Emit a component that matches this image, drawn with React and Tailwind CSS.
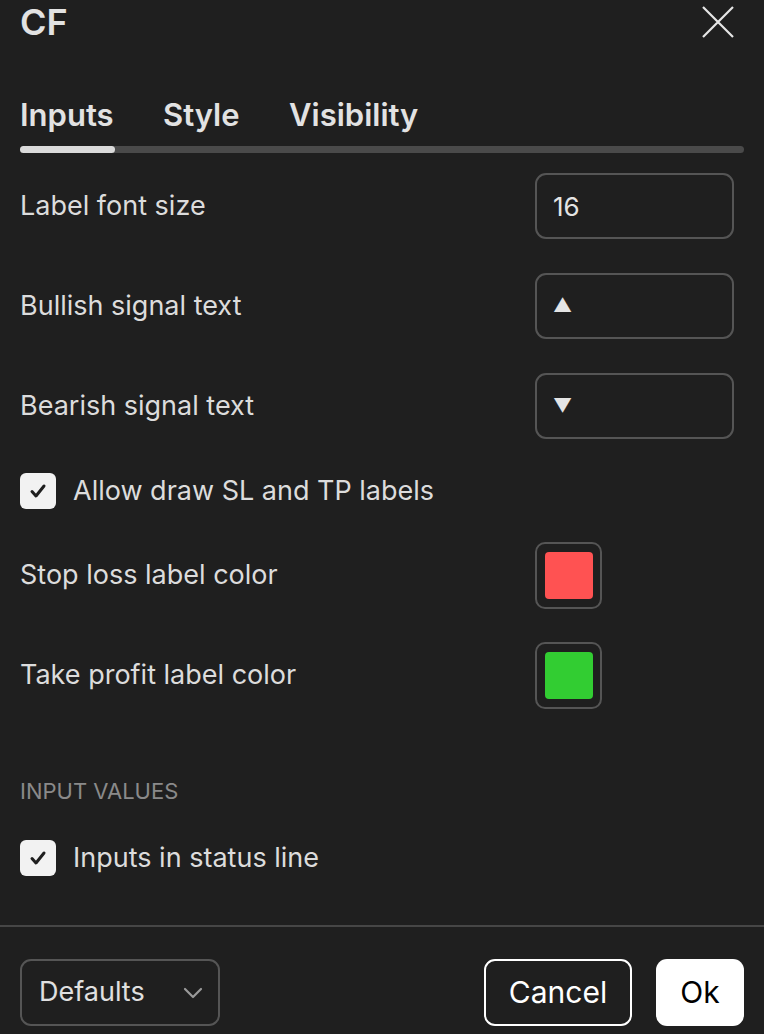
import React, { useState } from "react";

const font = { fontFamily: "Inter, 'Liberation Sans', sans-serif" };

function TextRow({ label, value, small, mt }) {
  return (
    <div className={`flex items-center justify-between h-[66px] ${mt}`}>
      <span className="text-[27px] text-[#dcdcdc]">{label}</span>
      <div
        className={`w-[199px] h-[66px] mr-[10px] rounded-[11px] border-2 border-[#555555] flex items-center pl-[16px] text-[#e4e4e4] ${
          small ? "text-[19px]" : "text-[26px]"
        }`}
      >
        {value}
      </div>
    </div>
  );
}

function ColorRow({ label, color, mt }) {
  return (
    <div className={`flex items-center h-[67px] ${mt}`}>
      <span className="flex-1 text-[27px] text-[#dcdcdc]">{label}</span>
      <div className="w-[67px] h-[67px] rounded-[10px] border-2 border-[#555555] flex items-center justify-center mr-[142px]">
        <div className={`w-[48px] h-[47px] rounded-[4px] ${color}`}></div>
      </div>
    </div>
  );
}

function CheckRow({ label, mt }) {
  return (
    <div className={`flex items-center h-[36px] ${mt}`}>
      <div className="w-[36px] h-[36px] rounded-[6px] bg-[#f2f2f2] flex items-center justify-center">
        <svg width="20" height="20" viewBox="0 0 20 20" fill="none">
          <path
            d="M4 10.5l4 4.5 8-10"
            stroke="#1f1f1f"
            strokeWidth="3"
            strokeLinecap="round"
            strokeLinejoin="round"
          />
        </svg>
      </div>
      <span className="ml-[17px] text-[27px] text-[#dcdcdc]">{label}</span>
    </div>
  );
}

export default function App() {
  const [tab] = useState("Inputs");

  return (
    <div className="w-[764px] h-[1034px] bg-[#1f1f1f] overflow-hidden flex flex-col" style={font}>
      <div className="px-[20px]">
        {/* header */}
        <div className="flex items-center justify-between h-[44px]">
          <span className="text-[36px] font-semibold text-[#e2e2e2] leading-none">CF</span>
          <svg width="34" height="34" viewBox="0 0 34 34" fill="none" className="mr-[9px]">
            <path d="M2 2l30 30M32 2L2 32" stroke="#e6e6e6" strokeWidth="2.2" />
          </svg>
        </div>

        {/* tabs */}
        <div className="flex items-center h-[40px] mt-[51px] text-[31px] font-semibold text-[#e2e2e2]">
          <span className="w-[143px]">Inputs</span>
          <span className="w-[126px]">Style</span>
          <span>Visibility</span>
        </div>
        <div className="mt-[11px] h-[7px] rounded-full bg-[#4a4a4a] flex">
          <div className={`h-[7px] w-[95px] rounded-full ${tab === "Inputs" ? "bg-[#dadada]" : ""}`}></div>
        </div>

        <TextRow label="Label font size" value="16" mt="mt-[20px]" />
        <TextRow label="Bullish signal text" value="▲" small mt="mt-[34px]" />
        <TextRow label="Bearish signal text" value="▼" small mt="mt-[34px]" />

        <CheckRow label="Allow draw SL and TP labels" mt="mt-[34px]" />

        <ColorRow label="Stop loss label color" color="bg-[#ff5252]" mt="mt-[33px]" />
        <ColorRow label="Take profit label color" color="bg-[#32cd32]" mt="mt-[33px]" />

        <div className="mt-[70px] h-[24px] flex items-center text-[22px] text-[#8a8a8a] uppercase">
          Input values
        </div>

        <CheckRow label="Inputs in status line" mt="mt-[37px]" />
      </div>

      <div className="mt-[49px] h-[2px] bg-[#464646]"></div>

      {/* footer */}
      <div className="px-[20px] mt-[32px] flex items-center">
        <div className="w-[200px] h-[67px] rounded-[11px] border-2 border-[#555555] flex items-center justify-between pl-[17px] pr-[14px]">
          <span className="text-[27px] text-[#e0e0e0]">Defaults</span>
          <svg width="22" height="14" viewBox="0 0 22 14" fill="none">
            <path d="M3 3l8 8 8-8" stroke="#9a9a9a" strokeWidth="2.2" strokeLinecap="round" strokeLinejoin="round" />
          </svg>
        </div>
        <div className="flex-1"></div>
        <button className="w-[148px] h-[67px] rounded-[11px] border-2 border-white text-[30px] text-white flex items-center justify-center">
          Cancel
        </button>
        <button className="ml-[24px] w-[88px] h-[67px] rounded-[11px] bg-white text-[30px] text-black flex items-center justify-center">
          Ok
        </button>
      </div>
    </div>
  );
}
